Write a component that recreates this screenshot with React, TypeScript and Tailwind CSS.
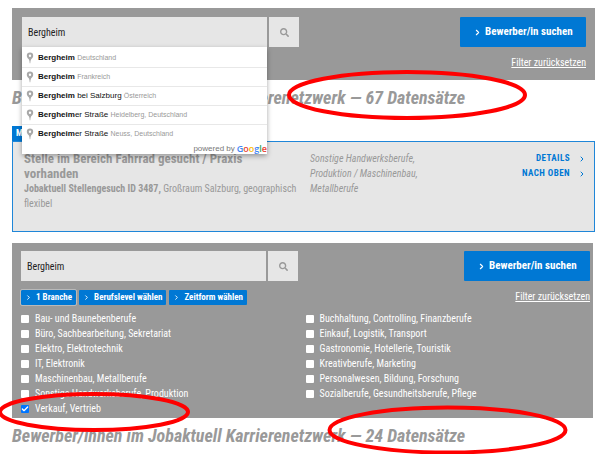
import { useState } from "react";
import { Check, ChevronRight } from "lucide-react";
import { FaSearch } from "react-icons/fa";

const places = [
  { match: "Bergheim", rest: "", region: "Deutschland" },
  { match: "Bergheim", rest: "", region: "Frankreich" },
  { match: "Bergheim", rest: " bei Salzburg", region: "Österreich" },
  { match: "Bergheim", rest: "er Straße", region: "Heidelberg, Deutschland" },
  { match: "Bergheim", rest: "er Straße", region: "Neuss, Deutschland" },
];

const leftSectors = [
  "Bau- und Baunebenberufe",
  "Büro, Sachbearbeitung, Sekretariat",
  "Elektro, Elektrotechnik",
  "IT, Elektronik",
  "Maschinenbau, Metallberufe",
  "Sonstige Handwerksberufe, Produktion",
  "Verkauf, Vertrieb",
];

const rightSectors = [
  "Buchhaltung, Controlling, Finanzberufe",
  "Einkauf, Logistik, Transport",
  "Gastronomie, Hotellerie, Touristik",
  "Kreativberufe, Marketing",
  "Personalwesen, Bildung, Forschung",
  "Sozialberufe, Gesundheitsberufe, Pflege",
];

function Pin() {
  return (
    <svg viewBox="0 0 8 12" className="h-3 w-2 shrink-0" aria-hidden="true">
      <path
        fill="#a8a8a8"
        fillRule="evenodd"
        d="M4 0.5a3.2 3.2 0 0 0-3.2 3.2c0 1.5 1 2.4 1.8 3.4.7.9 1 2.2 1.1 4.2h.6c.1-2 .4-3.300 1.100-4.200.8-1 1.800-1.900 1.800-3.400A3.200 3.200 0 0 0 4 .5zM4 2.500a1.200 1.200 0 1 1 0 2.400 1.200 1.200 0 0 1 0-2.400z"
      />
    </svg>
  );
}

function Suggestions() {
  return (
    <div className="absolute inset-x-0 top-full z-10 bg-white font-['Liberation_Sans',Arial,sans-serif] shadow-[0_2px_5px_rgba(0,0,0,0.35)]">
      <ul className="pt-px">
        {places.map((p) => (
          <li
            key={p.match + p.rest + p.region}
            className="flex h-[19px] items-center gap-1 border-t border-[#e8e8e8] px-1 text-[8px] whitespace-nowrap text-[#111] first:border-transparent"
          >
            <Pin />
            <span>
              <b>{p.match}</b>
              {p.rest} <span className="text-[7px] text-[#999]">{p.region}</span>
            </span>
          </li>
        ))}
      </ul>
      <div className="flex h-[11px] items-center justify-end gap-0.5 text-[8px] text-[#777]">
        powered by
        <span className="font-['Open_Sans',sans-serif] text-[9px] leading-[11px] font-semibold">
          <span className="text-[#4285f4]">G</span>
          <span className="text-[#ea4335]">o</span>
          <span className="text-[#fbbc05]">o</span>
          <span className="text-[#4285f4]">g</span>
          <span className="text-[#34a853]">l</span>
          <span className="text-[#ea4335]">e</span>
        </span>
      </div>
    </div>
  );
}

function SearchRow({ label, open }: { label: string; open?: boolean }) {
  const [value, setValue] = useState("Bergheim");
  return (
    <form className="flex justify-between" onSubmit={(e) => e.preventDefault()}>
      <div className="flex gap-0.5">
        <div className="relative">
          <input
            type="text"
            aria-label={label}
            value={value}
            onChange={(e) => setValue(e.target.value)}
            className="block h-[30px] w-[245px] bg-[#e6e6e6] px-1.5 text-[10px] text-[#222] outline-none"
          />
          {open && <Suggestions />}
        </div>
        <button
          type="button"
          aria-label="Ort suchen"
          className="flex h-[30px] w-[30px] items-center justify-center bg-[#e6e6e6] text-[#999]"
        >
          <FaSearch size={9} />
        </button>
      </div>
      <button
        type="submit"
        className="flex h-[30px] w-[126px] items-center gap-[3px] rounded-[1px] bg-[#0078d4] pl-[13px] text-[11px] font-bold whitespace-nowrap text-white"
      >
        <ChevronRight size={9} strokeWidth={3} />
        Bewerber/in suchen
      </button>
    </form>
  );
}

function ResetLink() {
  return (
    <a href="#" className="text-[10px] leading-3.5 text-white underline">
      Filter zurücksetzen
    </a>
  );
}

function ResultHeading({ count }: { count: number }) {
  return (
    <h2 className="flex h-[34px] items-center text-[18px] font-bold whitespace-nowrap text-[#999] italic">
      Bewerber/innen im Jobaktuell Karrierenetzwerk — {count} Datensätze
    </h2>
  );
}

function Sector({ label, checked }: { label: string; checked?: boolean }) {
  return (
    <label className="flex h-[15px] items-center gap-1.5 text-[10px] whitespace-nowrap text-white">
      <span className="grid size-2 shrink-0">
        <input
          type="checkbox"
          defaultChecked={checked}
          className="peer col-start-1 row-start-1 m-0 size-2 appearance-none rounded-[1px] bg-white checked:bg-[#0075ff]"
        />
        <Check
          size={8}
          strokeWidth={4}
          className="pointer-events-none invisible col-start-1 row-start-1 peer-checked:visible"
        />
      </span>
      {label}
    </label>
  );
}

function Chip({ label, active }: { label: string; active?: boolean }) {
  return (
    <button
      type="button"
      className={
        "flex h-[15px] items-center gap-1 rounded-[1px] bg-[#0078d4] px-1 text-[9px] font-bold whitespace-nowrap text-white " +
        (active ? "outline outline-[#b9b9b9]" : "")
      }
    >
      <ChevronRight size={7} strokeWidth={3} />
      {label}
    </button>
  );
}

function ActionLink({ label }: { label: string }) {
  return (
    <a href="#" className="flex items-center justify-end gap-2 text-[9px] leading-[15px] font-bold tracking-wider text-[#0078d4]">
      {label}
      <ChevronRight size={8} strokeWidth={3} />
    </a>
  );
}

export default function App() {
  return (
    <main className="relative overflow-hidden bg-white pt-2 pr-2.5 pb-0.5 pl-3 font-['Roboto_Condensed','Liberation_Sans_Narrow',Roboto,sans-serif]">
      <section>
        <div className="h-[72px] bg-[#999] pt-[9px] pr-[9px] pl-2.5">
          <SearchRow label="Ort" open />
          <div className="mt-[9px] flex justify-end">
            <ResetLink />
          </div>
        </div>
        <ResultHeading count={67} />
        <div className="mt-3">
          <span className="block h-[15px] w-10 bg-[#0078d4] px-1 text-[9px] leading-[15px] font-bold text-white">MERKEN</span>
          <article className="flex h-[91px] border border-[#1f86d8] bg-[#e6e6e6] pt-[9px] pr-2 pl-[11px] text-[#999]">
            <div className="w-[286px] shrink-0">
              <h3 className="w-[240px] text-[13px] leading-[15px] font-bold">
                Stelle im Bereich Fahrrad gesucht / Praxis vorhanden
              </h3>
              <p className="text-[10px] leading-[15px]">
                <b>Jobaktuell Stellengesuch ID 3487,</b> Großraum Salzburg, geographisch flexibel
              </p>
            </div>
            <p className="w-[120px] text-[10px] leading-[15px] italic">
              Sonstige Handwerksberufe, Produktion / Maschinenbau, Metallberufe
            </p>
            <nav className="flex-1">
              <ActionLink label="DETAILS" />
              <ActionLink label="NACH OBEN" />
            </nav>
          </article>
        </div>
      </section>

      <section className="mt-[11px] mr-0.5">
        <div className="h-[175px] bg-[#999] pt-2 pr-[3px] pl-[9px]">
          <SearchRow label="Ort oder Region" />
          <div className="flex justify-between pt-[9px]">
            <div className="flex gap-[3px]">
              <Chip label="1 Branche" active />
              <Chip label="Berufslevel wählen" />
              <Chip label="Zeitform wählen" />
            </div>
            <ResetLink />
          </div>
          <div className="grid grid-cols-2 pt-1.5">
            <div>
              {leftSectors.map((s) => (
                <Sector key={s} label={s} checked={s === "Verkauf, Vertrieb"} />
              ))}
            </div>
            <div>
              {rightSectors.map((s) => (
                <Sector key={s} label={s} />
              ))}
            </div>
          </div>
        </div>
        <ResultHeading count={24} />
      </section>

      <svg
        className="pointer-events-none absolute top-0 left-0 z-20 h-[454px] w-[605px]"
        viewBox="0 0 605 454"
        fill="none"
        stroke="#ff0000"
        strokeWidth="4"
        aria-hidden="true"
      >
        <ellipse cx="407" cy="95" rx="118" ry="23" />
        <ellipse cx="94" cy="412" rx="94" ry="18" />
        <ellipse cx="447.500" cy="430" rx="118" ry="22.500" />
      </svg>
    </main>
  );
}
